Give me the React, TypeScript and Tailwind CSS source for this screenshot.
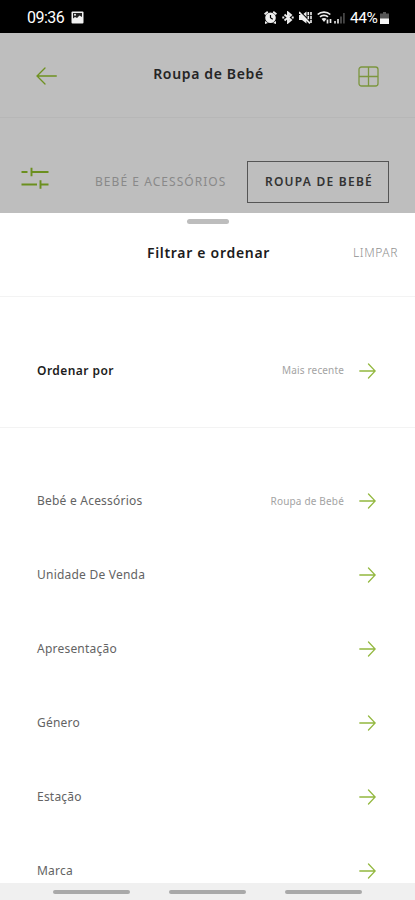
import React from "react";

const filters = [
  { label: "Bebé e Acessórios", value: "Roupa de Bebé" },
  { label: "Unidade De Venda" },
  { label: "Apresentação" },
  { label: "Género" },
  { label: "Estação" },
  { label: "Marca" },
];

function ArrowRight() {
  return (
    <svg className="w-[17px] h-[16px] shrink-0" viewBox="0 0 17 16" fill="none" stroke="#93b83f" strokeWidth={1.3} strokeLinecap="round">
      <path d="M.8 8h15.400M9.500 1l6.700 7-6.700 7" />
    </svg>
  );
}

function StatusBar() {
  return (
    <div className="h-[33px] bg-black flex items-center pl-[27px] pr-[26px] pt-[3px] text-white">
      <span className="font-['Roboto'] text-[16px] leading-none tracking-[-0.5px] w-[39px]">09:36</span>
      <svg className="w-[13px] h-[13px] ml-[5px] -mt-[1px]" viewBox="0 0 13 13">
        <rect x="0.5" y="0.5" width="12" height="12" rx="1" fill="#f2f2f2" />
        <path d="M2 2h9v4L8.500 4.500 6 7 4 6 2 7.500z" fill="#222" />
        <circle cx="4" cy="3.800" r="1" fill="#f2f2f2" />
      </svg>

      <div className="ml-auto flex items-center -mt-[1px]">
        {/* Alarm */}
        <svg className="w-[13px] h-[13px]" viewBox="0 0 13 13" fill="#eee">
          <path d="M0 2.600 3.200 0l1.200 1.500L1.200 4zM13 2.600 9.800 0 8.600 1.500 11.800 4z" />
          <path fillRule="evenodd" d="M6.500 1.400a5.300 5.300 0 1 0 0 10.600 5.300 5.300 0 0 0 0-10.600zM5.900 4h1.200v2.400l2 1.300-.7 1L5.900 7z" />
          <path d="M1 13v-3l3 2zM12 13v-3l-3 2z" />
        </svg>
        {/* Bluetooth */}
        <svg className="w-[12px] h-[13px] ml-[5px]" viewBox="0 0 12 13" fill="none" stroke="#eee" strokeWidth={1.900}>
          <path d="M2.500 3.600 9 9 6 11.500v-10L9 4 2.500 9.400" />
          <path d="M.3 6.500h2M9.700 6.500h2" strokeWidth={2} />
        </svg>
        {/* Muted, vibrating */}
        <svg className="w-[13px] h-[13px] ml-[5px]" viewBox="0 0 13 13">
          <path d="M0 4h3l4.500-3.500v12L3 9H0z" fill="#eee" />
          <path d="M1 .5 12.500 11.800" stroke="#000" strokeWidth={1.200} />
          <path d="M0 1 11 12.300" stroke="#eee" strokeWidth={1.700} />
          <path d="M9.300 1v8M12 1v11.500" stroke="#eee" strokeWidth={1.600} strokeDasharray="3.200 .7" />
        </svg>
        {/* Wifi */}
        <svg className="w-[16px] h-[13px] ml-[5px]" viewBox="0 0 16 13" fill="none" stroke="#eee" strokeWidth={1.700}>
          <path d="M.7 3.500C4 .2 10 .2 13.300 3.500M3 5.900c2.200-2 5.800-2 8 0" />
          <path d="M4.500 7.800c1.500-1.200 3.500-1.200 5 0L7 11z" fill="#eee" stroke="none" />
          <path d="M10.500 12.500v-4M13.500 8v4" strokeWidth={1.700} />
        </svg>
        {/* Signal */}
        <svg className="w-[12px] h-[12px]" viewBox="0 0 12 12">
          <path d="M1 9h2v2.500H1zM4 7h2v4.500H4z" fill="#bbb" />
          <path d="M7 4.500h2v7H7zM10 1h1.800v10.500H10z" fill="#444" />
        </svg>
        <span className="font-['Roboto'] text-[15.5px] leading-none tracking-[-0.4px] ml-[5px] mt-[2px] w-[29px] whitespace-nowrap">44%</span>
        <svg className="w-[9px] h-[12px] ml-[1px]" viewBox="0 0 9 12">
          <path d="M3 0h3v1.500h3V7H0V1.500h3z" fill="#555" />
          <path d="M0 6.500h9V12H0z" fill="#f5f5f5" />
        </svg>
      </div>
    </div>
  );
}

function Header() {
  return (
    <div className="h-[85px] border-b border-[#b7b7b7] grid grid-cols-[1fr_auto_1fr] items-center px-[36px]">
      <svg className="w-[21px] h-[18px] mt-[2px]" viewBox="0 0 21 18" fill="none" stroke="#6f9121" strokeWidth={1.300} strokeLinecap="round">
        <path d="M1 9h19.300M9 1 1 9l8 8" />
      </svg>
      <h1 className="text-[14px] leading-5 font-semibold tracking-[0.65px] text-[#252525] -mt-[2px] translate-x-[1px]">Roupa de Bebé</h1>
      <svg className="w-[21px] h-[21px] mt-[2px] justify-self-end" viewBox="0 0 21 21" fill="none" stroke="#7c963f" strokeWidth={1.300}>
        <rect x="1" y="1" width="19" height="19" rx="2.500" />
        <path d="M10.500 1v19M1 10.500h19" />
      </svg>
    </div>
  );
}

function CategoryTabs() {
  return (
    <div className="h-[95px] flex items-center pl-[21px] pt-[32px]">
      <svg className="w-[28px] h-[22px] shrink-0 -mt-[7px]" viewBox="0 0 28 22" fill="none" stroke="#6b8f1f" strokeWidth={1.900}>
        <path d="M.5 5h6M10 5h17.500M10.500 .8v8.400M.5 17.500h15.500M19.500 17.500h8M19.500 13.300v8.400" />
      </svg>
      <span className="ml-[46px] w-[132px] text-[12px] tracking-[1.05px] text-[#898989] whitespace-nowrap">BEBÉ E ACESSÓRIOS</span>
      <div className="ml-[20px] w-[142px] h-[42px] border border-[#555] flex items-center justify-center pl-[2px] text-[12px] font-semibold tracking-[1.25px] text-[#333] whitespace-nowrap">
        ROUPA DE BEBÉ
      </div>
    </div>
  );
}

export default function App() {
  return (
    <div className="w-[415px] h-[900px] flex flex-col overflow-hidden bg-[#bebebe] font-['Noto_Sans',sans-serif]">
      <StatusBar />
      <Header />
      <CategoryTabs />

      <div className="flex-1 min-h-0 bg-white flex flex-col overflow-hidden">
        <div className="h-[84px] shrink-0 border-b border-[#f3f3f3]">
          <div className="w-[42px] h-[5px] rounded-full bg-[#bdbdbd] mx-auto mt-[6px]" />
          <div className="grid grid-cols-[1fr_auto_1fr] items-center mt-[19px] px-[17px]">
            <h2 className="col-start-2 text-[14px] leading-5 font-semibold tracking-[0.7px] text-[#1c1c1c] translate-x-[1px]">Filtrar e ordenar</h2>
            <button className="justify-self-end text-[12px] leading-5 font-light tracking-[0.6px] text-[#8f8f8f]">LIMPAR</button>
          </div>
        </div>

        <div className="h-[131px] shrink-0 border-b border-[#f3f3f3] flex items-center pl-[37px] pr-[39px] pt-[17px]">
          <span className="text-[12px] font-semibold tracking-[0.45px] text-[#1c1c1c]">Ordenar por</span>
          <span className="ml-auto mr-[15px] text-[10px] tracking-[0.15px] text-[#a3a3a3]">Mais recente</span>
          <ArrowRight />
        </div>

        <div className="pt-[36px]">
          {filters.map((f) => (
            <div key={f.label} className="h-[74px] flex items-center pl-[37px] pr-[39px]">
              <span className="text-[12px] tracking-[0.22px] text-[#636363]">{f.label}</span>
              <span className="ml-auto mr-[15px] text-[10px] tracking-[0.18px] text-[#a3a3a3]">{f.value}</span>
              <ArrowRight />
            </div>
          ))}
        </div>
      </div>

      {/* Navigation bar */}
      <div className="h-[17px] shrink-0 bg-[#f0f0f0] flex items-center justify-center gap-[39px]">
        <div className="w-[77px] h-[4px] rounded-full bg-[#a9a9a9]" />
        <div className="w-[77px] h-[4px] rounded-full bg-[#a9a9a9]" />
        <div className="w-[77px] h-[4px] rounded-full bg-[#a9a9a9]" />
      </div>
    </div>
  );
}
